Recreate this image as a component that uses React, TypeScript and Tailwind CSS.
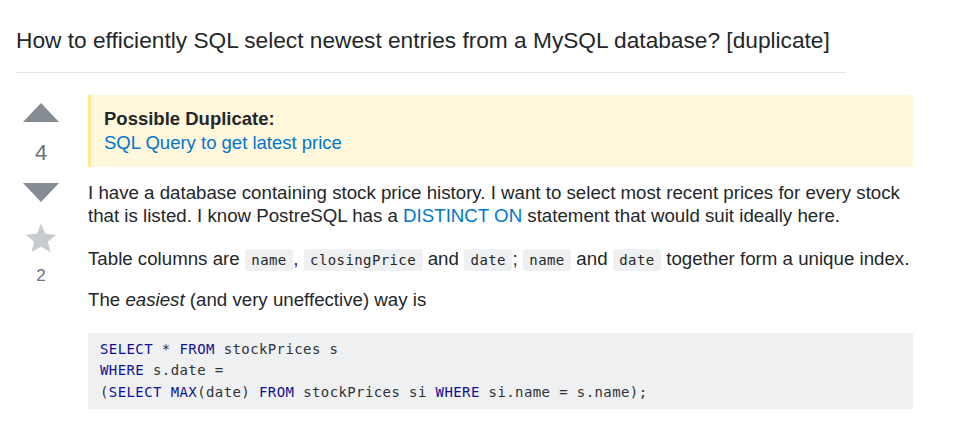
import React from 'react';

const kw = 'text-[#101094]';

const Code: React.FC<{ children: React.ReactNode }> = ({ children }) => (
    <code className="bg-[#eff0f1] px-[6.5px] py-[3px] rounded-[3px] text-[14px] tracking-[0.4px] text-[#242729] [font-family:'DejaVu_Sans_Mono',monospace]">
        {children}
    </code>
);

const App: React.FC = () => {
    return (
        <div className="w-[978px] h-[429px] bg-white overflow-hidden pl-4 pt-[24px] text-[#242729] [font-family:'Liberation_Sans',Arial,sans-serif]">
            <h1 className="text-[22.7px] leading-[32px] text-[#242729] font-normal">
                How to efficiently SQL select newest entries from a MySQL database? [duplicate]
            </h1>
            <div className="w-[830px] h-px bg-[#e4e6e8] mt-[16px]" />

            <div className="flex mt-[22px]">
                {/* votes */}
                <div className="w-[50px] flex flex-col items-center pt-[8px]">
                    <svg width="36" height="19" viewBox="0 0 36 19">
                        <path d="M0 19h36L18 0z" fill="#858c93" />
                    </svg>
                    <div className="text-[22px] leading-[26px] mt-[18px] text-[#6a737c]">4</div>
                    <svg width="36" height="19" viewBox="0 0 36 19" className="mt-[17px]">
                        <path d="M0 0h36L18 19z" fill="#858c93" />
                    </svg>
                    <svg width="34" height="32" viewBox="0 0 24 23" className="mt-[21px]">
                        <path d="M12 0.5l3.1 7.2 7.8.7-5.9 5.1 1.8 7.6L12 17.1l-6.8 4 1.8-7.6-5.9-5.1 7.8-.7z" fill="#c8ccd0" />
                    </svg>
                    <div className="text-[17px] leading-[20px] mt-[11px] text-[#6a737c]">2</div>
                </div>

                {/* post */}
                <div className="ml-[22px] w-[825px] text-[18.7px] leading-[23px]">
                    <div className="bg-[#fff8dc] border-l-[3px] border-[#ffeb8e] pl-[13px] pt-[12px] pb-[12px] text-[18.5px]">
                        <div className="font-bold leading-[24px]">Possible Duplicate:</div>
                        <div className="text-[#0077cc] leading-[24px]">SQL Query to get latest price</div>
                    </div>

                    <p className="mt-[14px]">
                        I have a database containing stock price history. I want to select most recent prices for every stock
                        that is listed. I know PostreSQL has a <span className="text-[#0077cc]">DISTINCT ON</span> statement that would suit ideally here.
                    </p>

                    <p className="mt-[20px]">
                        Table columns are <Code>name</Code>, <Code>closingPrice</Code> and <Code>date</Code>; <Code>name</Code> and <Code>date</Code> together form a unique index.
                    </p>

                    <p className="mt-[16px]">
                        The <em>easiest</em> (and very uneffective) way is
                    </p>

                    <pre className="mt-[22px] bg-[#eff0f1] px-[12px] py-[5.5px] text-[14px] leading-[21.5px] tracking-[0.4px] text-[#303336] [font-family:'DejaVu_Sans_Mono',monospace]">
                        <span className={kw}>SELECT</span> * <span className={kw}>FROM</span> stockPrices s{'\n'}
                        <span className={kw}>WHERE</span> s.date ={'\n'}
                        (<span className={kw}>SELECT</span> <span className={kw}>MAX</span>(date) <span className={kw}>FROM</span> stockPrices si <span className={kw}>WHERE</span> si.name = s.name);
                    </pre>
                </div>
            </div>
        </div>
    );
};

export default App;
